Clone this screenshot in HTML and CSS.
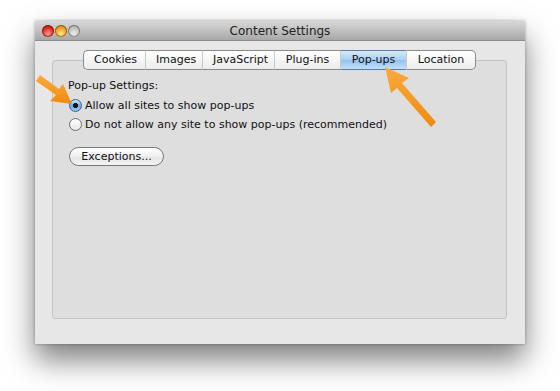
FILE: index.html
```html
<!DOCTYPE html>
<html lang="en">
<head>
    <meta charset="UTF-8">
    <title>Content Settings</title>
    <link rel="stylesheet" href="styles.css">
</head>
<body>
    <div class="window">
        <div class="titlebar">
            <div class="lights">
                <span class="light red"></span>
                <span class="light orange"></span>
                <span class="light gray"></span>
            </div>
            <div class="title">Content Settings</div>
        </div>
        <div class="panel">
            <div class="tabs">
                <span class="tab">Cookies</span>
                <span class="tab">Images</span>
                <span class="tab">JavaScript</span>
                <span class="tab">Plug-ins</span>
                <span class="tab active">Pop-ups</span>
                <span class="tab">Location</span>
            </div>
            <div class="settings">
                <div class="label">Pop-up Settings:</div>
                <label class="radio-row"><span class="radio checked"></span>Allow all sites to show pop-ups</label>
                <label class="radio-row"><span class="radio"></span>Do not allow any site to show pop-ups (recommended)</label>
                <button class="btn" type="button">Exceptions...</button>
            </div>
        </div>
    </div>

    <!-- callout arrows drawn over the screenshot -->
    <svg class="arrows" width="560" height="391" viewBox="0 0 560 391">
        <defs>
            <linearGradient id="org" x1="0" y1="0" x2="0" y2="1">
                <stop offset="0" stop-color="#fbaa3c"/>
                <stop offset="1" stop-color="#ef8a12"/>
            </linearGradient>
        </defs>
        <g fill="url(#org)">
            <path d="M36 81 L40 75 L59 89 L63 84 L72 104 L50 101 L56 95 Z"/>
            <path d="M436 122 L431 127 L397 88 L391 93 L385 67 L409 78 L402 83 Z"/>
        </g>
    </svg>
</body>
</html>
```

FILE: styles.css
```css
body {
    margin: 0;
    padding: 21px 0 0 35px;
    height: 391px;
    box-sizing: border-box;
    background: #fff;
    font-family: "DejaVu Sans", sans-serif;
    font-size: 11px;
    color: #111;
    position: relative;
    overflow: hidden;
}
.window {
    width: 490px;
    height: 323px;
    background: #e7e7e7;
    box-shadow: 0 16px 28px rgba(0, 0, 0, 0.5), 0 0 3px rgba(0, 0, 0, 0.3);
    display: flex;
    flex-direction: column;
}
.titlebar {
    height: 19px;
    background: linear-gradient(#d8d8d8, #a8a8a8);
    border-bottom: 1px solid #8d8d8d;
    display: flex;
    align-items: center;
    position: relative;
}
.lights {
    display: flex;
    gap: 1px;
    padding-left: 7px;
}
.light {
    width: 12px;
    height: 12px;
    border-radius: 50%;
    box-shadow: inset 0 0 0 1px rgba(0, 0, 0, 0.35);
}
.light.red {
    background: radial-gradient(circle at 50% 72%, #ff9a90 0%, #e0281f 55%, #9a0d0a 100%);
}
.light.orange {
    background: radial-gradient(circle at 50% 72%, #ffe88a 0%, #f2a01b 55%, #a4600a 100%);
}
.light.gray {
    background: radial-gradient(circle at 50% 72%, #ececec 0%, #bdbdbd 60%, #909090 100%);
}
.title {
    position: absolute;
    left: 0;
    right: 0;
    text-align: center;
    font-size: 12px;
    color: #222;
}
.panel {
    margin: 19px 18px 25px 17px;
    flex: 1;
    background: #dedede;
    border: 1px solid #c4c4c4;
    border-radius: 3px;
}
.tabs {
    display: flex;
    justify-content: center;
    margin-top: -11px;
}
.tab {
    height: 18px;
    line-height: 18px;
    padding: 0 10px;
    background: linear-gradient(#ffffff, #ececec);
    border-top: 1px solid #8a8a8a;
    border-bottom: 1px solid #8a8a8a;
    border-left: 1px solid #c9c9c9;
    text-align: center;
}
.tab:first-child {
    border-left: 1px solid #8a8a8a;
    border-radius: 5px 0 0 5px;
    width: 41px;
}
.tab:last-child {
    border-right: 1px solid #8a8a8a;
    border-radius: 0 5px 5px 0;
    width: 48px;
}
.tab:nth-child(2) { width: 36px; }
.tab:nth-child(3) { width: 51px; }
.tab:nth-child(4) { width: 45px; }
.tab.active {
    width: 45px;
    background: linear-gradient(#d5e9fb, #a9cff3 50%, #93c1ee 51%, #c2e0fb);
    border-top-color: #5d7aa3;
    border-bottom-color: #5d7aa3;
}
.settings {
    padding: 8px 0 0 15px;
    display: flex;
    flex-direction: column;
    align-items: flex-start;
}
.label {
    height: 16px;
    line-height: 16px;
    margin-bottom: 2px;
}
.radio-row {
    display: flex;
    align-items: center;
    height: 19px;
    gap: 3px;
}
.radio {
    width: 11px;
    height: 11px;
    border-radius: 50%;
    border: 1px solid #6f6f6f;
    background: linear-gradient(#ffffff, #e6e6e6);
    margin-left: 1px;
}
.radio.checked {
    border-color: #3d5f8f;
    background: radial-gradient(circle, #101820 0 2.3px, transparent 2.8px),
        linear-gradient(#cfe6fb, #6fa9e6 55%, #9ccaf4);
}
.btn {
    margin-top: 13px;
    margin-left: 1px;
    width: 95px;
    height: 19px;
    font-family: "DejaVu Sans", sans-serif;
    font-size: 11px;
    color: #111;
    border: 1px solid #777;
    border-radius: 10px;
    background: linear-gradient(#ffffff, #efefef 50%, #e3e3e3 51%, #f5f5f5);
    padding: 0;
}
.arrows {
    position: absolute;
    left: 0;
    top: 0;
}
```
